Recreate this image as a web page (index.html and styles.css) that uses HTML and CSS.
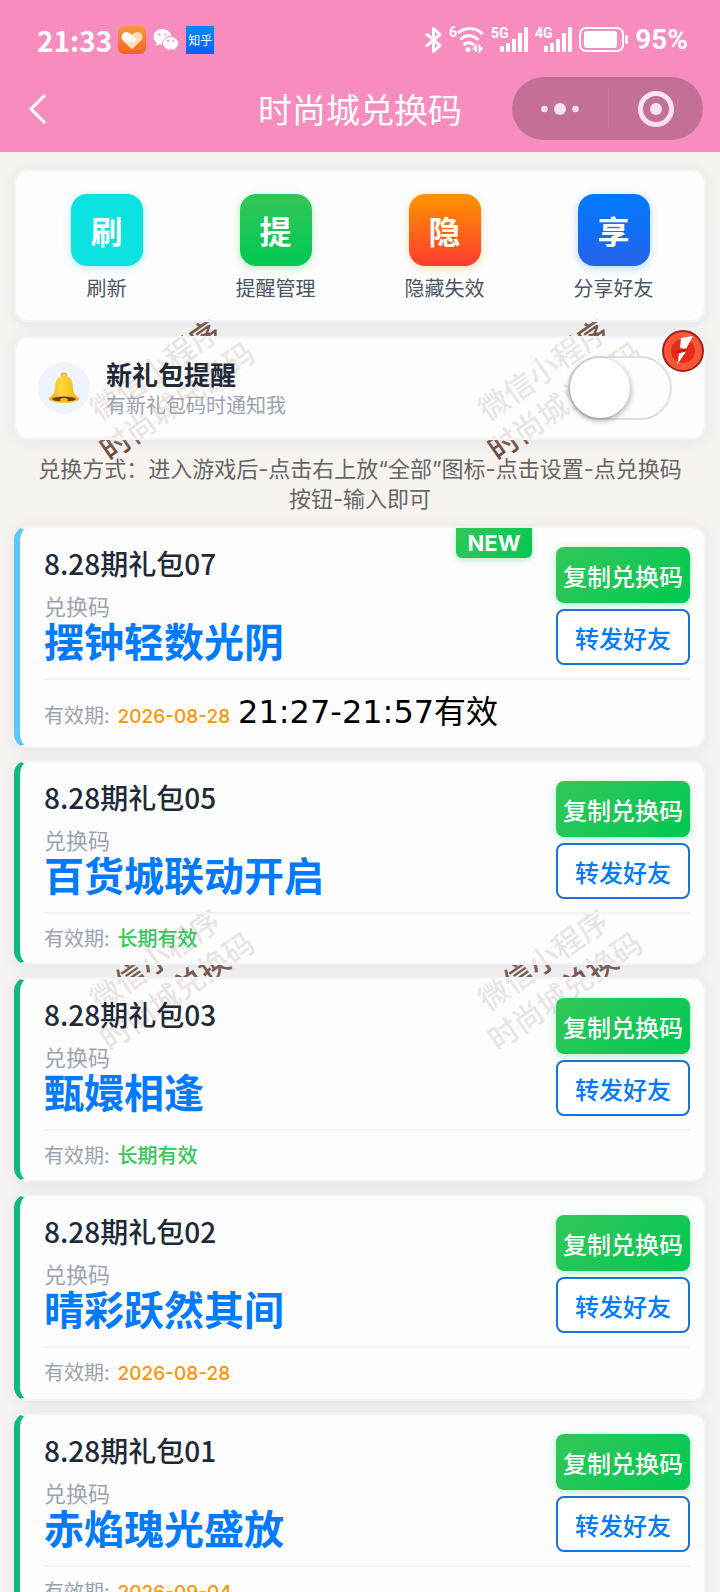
FILE: index.html
```html
<!DOCTYPE html>
<html lang="zh-CN">
<head>
    <meta charset="UTF-8">
    <meta name="viewport" content="width=device-width, initial-scale=1.0">
    <title>时尚城兑换码</title>
    <link rel="stylesheet" href="styles.css">
</head>
<body>
<div class="page">
    <header class="header">
        <div class="status">
            <span class="time">21:33</span>
            <svg width="28" height="28" viewBox="0 0 28 28">
                <defs>
                    <linearGradient id="orange" x1="0" y1="0" x2="0" y2="1">
                        <stop offset="0" stop-color="#f9973f"/>
                        <stop offset="1" stop-color="#f4641f"/>
                    </linearGradient>
                </defs>
                <rect width="28" height="28" rx="6" fill="url(#orange)"/>
                <path d="M14 23.500 5 15a6 6 0 0 1 0-7.500C7.500 5 11 6 14 8.500 17 5.500 21 5 23.500 8a5.500 5.500 0 0 1-.5 6.500z" fill="#ffdcb4"/>
                <path d="M4 12.500C3 9.500 4.500 6.500 8 6.500c3 0 5 2.500 8.500 5 2.500 2 .5 5.500-2.500 4.500-3-.8-7 1-10-3.500z" fill="#fff"/>
            </svg>
            <svg width="28" height="28" viewBox="0 0 28 28">
                <path d="M10.500 3C5.500 3 1.500 6.500 1.500 10.800c0 2.400 1.200 4.500 3.200 6L4 20l3.500-1.800c1 .3 2 .4 3 .4C16 18.600 19.500 15 19.500 10.800S15.500 3 10.500 3z" fill="#fff"/>
                <path d="M18.500 10.500c-4.400 0-8 3-8 6.800s3.600 6.700 8 6.700c.9 0 1.800-.1 2.600-.4L24 25l-.7-2.500c2-1.200 3.200-3.100 3.200-5.200 0-3.800-3.600-6.800-8-6.800z" fill="#fff" stroke="#f78dbf"/>
                <g fill="#f78dbf"><circle cx="7.500" cy="8.500" r="1.100"/><circle cx="13.500" cy="8.500" r="1.100"/><circle cx="16" cy="15" r="1"/><circle cx="21" cy="15" r="1"/></g>
            </svg>
            <span class="zhihu">知乎</span>
            <span class="spacer"></span>
            <svg width="18" height="28" viewBox="0 0 18 28" fill="none" stroke="#fff" stroke-width="3" stroke-linejoin="round" stroke-linecap="round">
                <path d="M2 8.500 15 19.500 8.500 25.500V2.500L15 8.500 2 19.500"/>
            </svg>
            <svg class="wifi" width="36" height="28" viewBox="0 0 36 28" fill="none" stroke="#fff" stroke-width="3">
                <text x="0" y="11" class="net">6</text>
                <path d="M9 7C16 1 27 1 33.500 8M11.500 13.500c5-5 12-5 18 .5M14.500 19c3-3 7-3 10.500 0"/>
                <circle cx="19" cy="23.500" r="2.500" fill="#fff" stroke="none"/>
                <path d="M27 26v-6l-3 3.500M30.500 18.500V25l3-3.500" stroke-width="2"/>
            </svg>
            <svg class="signal" width="38" height="28" viewBox="0 0 38 28" fill="#fff">
                <text x="0" y="12" class="net">5G</text>
                <path d="M9 20h4v6H9zM15 17h4v9h-4zM21 13h4v13h-4zM27 7h4v19h-4zM33 1h4v25h-4z"/>
            </svg>
            <svg class="signal" width="38" height="28" viewBox="0 0 38 28" fill="#fff">
                <text x="0" y="12" class="net">4G</text>
                <path d="M9 20h4v6H9zM15 17h4v9h-4zM21 13h4v13h-4zM27 7h4v19h-4zM33 1h4v25h-4z"/>
            </svg>
            <svg width="50" height="28" viewBox="0 0 50 28" fill="#fff">
                <rect x="1" y="2" width="43" height="23" rx="6" fill="none" stroke="#fff" stroke-width="2"/>
                <rect x="5" y="5" width="33" height="17" rx="3"/>
                <rect x="46" y="9" width="3" height="9" rx="1"/>
            </svg>
            <span class="battery">95%</span>
        </div>
        <nav class="nav">
            <button class="back" type="button" aria-label="返回">
                <svg width="18" height="32" viewBox="0 0 18 32" fill="none" stroke="#fff" stroke-width="3"><path d="M16 2 2 16l14 14"/></svg>
            </button>
            <h1 class="title">时尚城兑换码</h1>
            <div class="capsule">
                <button type="button" aria-label="更多">
                    <svg width="38" height="38" viewBox="0 0 38 38" fill="#f6e0ec"><circle cx="3.500" cy="19" r="3.300"/><circle cx="19" cy="19" r="6"/><circle cx="34.500" cy="19" r="3.300"/></svg>
                </button>
                <button type="button" aria-label="关闭">
                    <svg width="38" height="38" viewBox="0 0 38 38" fill="#f6e0ec"><circle cx="19" cy="19" r="15.500" fill="none" stroke="#fbe3ef" stroke-width="5"/><circle cx="19" cy="19" r="6"/></svg>
                </button>
            </div>
        </nav>
    </header>

    <div class="watermark" aria-hidden="true">
        <span>微信小程序<br>时尚城兑换码</span>
        <span>微信小程序<br>时尚城兑换码</span>
        <span>微信小程序<br>时尚城兑换码</span>
        <span>微信小程序<br>时尚城兑换码</span>
    </div>

    <main class="content">
        <section class="card menu">
            <button class="menu-item" type="button"><span class="menu-icon cyan">刷</span>刷新</button>
            <button class="menu-item" type="button"><span class="menu-icon green">提</span>提醒管理</button>
            <button class="menu-item" type="button"><span class="menu-icon orange">隐</span>隐藏失效</button>
            <button class="menu-item" type="button"><span class="menu-icon blue">享</span>分享好友</button>
        </section>

        <section class="card remind">
            <span class="bell">
                <svg width="32" height="32" viewBox="0 0 32 32">
                    <defs>
                        <linearGradient id="gold" x1="0" y1="0" x2="1" y2="0">
                            <stop offset="0" stop-color="#f5a916"/>
                            <stop offset=".4" stop-color="#ffd93b"/>
                            <stop offset="1" stop-color="#f6ae14"/>
                        </linearGradient>
                    </defs>
                    <circle cx="16" cy="3.500" r="2.300" fill="none" stroke="#e99b10" stroke-width="1.500"/>
                    <path d="M16 4c-6 0-8.500 4-8.800 10C7 20 5.500 23 1 26c-1 3 7 5 15 5s16-2 15-5c-4.500-3-6-6-6.200-12C24.500 8 22 4 16 4z" fill="url(#gold)"/>
                    <ellipse cx="16" cy="27" rx="12" ry="2.500" fill="#6d3f16"/>
                    <ellipse cx="16" cy="28" rx="4" ry="2" fill="#f5b823"/>
                </svg>
            </span>
            <label class="remind-text" for="remind">
                <b>新礼包提醒</b>
                <span>有新礼包码时通知我</span>
            </label>
            <input class="switch" type="checkbox" id="remind">
            <svg class="flash" width="42" height="42" viewBox="0 0 42 42">
                <circle cx="21" cy="21" r="20" fill="#fa5638" stroke="#a51f1c" stroke-width="2"/>
                <circle cx="21" cy="21" r="12" fill="#e42c14"/>
                <path d="M19 8 31 6 24 19l-6-1z" fill="#fff"/>
                <path d="M17 23.500 24 21.500 15.500 34z" fill="#fff"/>
                <path d="M14 21 24 18.500v2.500L14 23z" fill="#c3200f"/>
            </svg>
        </section>

        <p class="notice">兑换方式：进入游戏后-点击右上放“全部”图标-点击设置-点兑换码按钮-输入即可</p>

        <section class="list">
            <article class="card gift new">
                <span class="badge">NEW</span>
                <div class="gift-main">
                    <div class="info">
                        <h2>8.28期礼包07</h2>
                        <p class="label">兑换码</p>
                        <p class="code">摆钟轻数光阴</p>
                    </div>
                    <div class="actions">
                        <button class="btn copy" type="button">复制兑换码</button>
                        <button class="btn share" type="button">转发好友</button>
                    </div>
                </div>
                <div class="valid">有效期: <span class="date">2026-08-28</span> <span class="hours">21:27-21:57有效</span></div>
            </article>

            <article class="card gift">
                <div class="gift-main">
                    <div class="info">
                        <h2>8.28期礼包05</h2>
                        <p class="label">兑换码</p>
                        <p class="code">百货城联动开启</p>
                    </div>
                    <div class="actions">
                        <button class="btn copy" type="button">复制兑换码</button>
                        <button class="btn share" type="button">转发好友</button>
                    </div>
                </div>
                <div class="valid">有效期: <span class="long">长期有效</span></div>
            </article>

            <article class="card gift">
                <div class="gift-main">
                    <div class="info">
                        <h2>8.28期礼包03</h2>
                        <p class="label">兑换码</p>
                        <p class="code">甄嬛相逢</p>
                    </div>
                    <div class="actions">
                        <button class="btn copy" type="button">复制兑换码</button>
                        <button class="btn share" type="button">转发好友</button>
                    </div>
                </div>
                <div class="valid">有效期: <span class="long">长期有效</span></div>
            </article>

            <article class="card gift">
                <div class="gift-main">
                    <div class="info">
                        <h2>8.28期礼包02</h2>
                        <p class="label">兑换码</p>
                        <p class="code">晴彩跃然其间</p>
                    </div>
                    <div class="actions">
                        <button class="btn copy" type="button">复制兑换码</button>
                        <button class="btn share" type="button">转发好友</button>
                    </div>
                </div>
                <div class="valid">有效期: <span class="date">2026-08-28</span></div>
            </article>

            <article class="card gift">
                <div class="gift-main">
                    <div class="info">
                        <h2>8.28期礼包01</h2>
                        <p class="label">兑换码</p>
                        <p class="code">赤焰瑰光盛放</p>
                    </div>
                    <div class="actions">
                        <button class="btn copy" type="button">复制兑换码</button>
                        <button class="btn share" type="button">转发好友</button>
                    </div>
                </div>
                <div class="valid">有效期: <span class="date">2026-09-04</span></div>
            </article>
        </section>
    </main>
</div>
</body>
</html>
```

FILE: styles.css
```css
* {
    box-sizing: border-box;
}
body {
    margin: 0;
    font-family: "Noto Sans CJK SC", sans-serif;
    color: #1f2937;
}
h1, h2, p {
    margin: 0;
}
button {
    font-family: inherit;
    border: none;
    padding: 0;
    background: none;
    cursor: pointer;
}
svg {
    display: block;
    flex: none;
    overflow: visible;
}

.page {
    position: relative;
    display: flex;
    flex-direction: column;
    height: 100vh;
    overflow: hidden;
    background: linear-gradient(#f7f4ee, #f7f3f2);
}

/* header */
.header {
    position: relative;
    z-index: 2;
    flex: none;
    padding-bottom: 12px;
    background: #f78dbf;
    color: #fff;
}
.status {
    display: flex;
    align-items: center;
    gap: 6px;
    height: 77px;
    padding: 2px 32px 0 37px;
}
.time {
    font-size: 28px;
    font-weight: 700;
    line-height: 32px;
}
.zhihu {
    width: 28px;
    background: linear-gradient(#0a8af5, #0560fa);
    font-size: 12px;
    line-height: 28px;
    text-align: center;
}
.spacer {
    flex: 1;
}
.net {
    fill: #fff;
    stroke: none;
    font-family: Roboto, sans-serif;
    font-size: 14px;
    font-weight: 700;
}
.battery {
    font-family: Roboto, sans-serif;
    font-size: 28px;
    font-weight: 700;
    line-height: 32px;
}
.nav {
    display: grid;
    grid-template-columns: 1fr auto 1fr;
    align-items: center;
    padding: 0 17px;
}
.back {
    justify-self: start;
    padding: 8px 12px;
}
.title {
    font-size: 34px;
    font-weight: 400;
    line-height: 48px;
}
.capsule {
    justify-self: end;
    display: grid;
    grid-template-columns: 1fr 1fr;
    align-items: center;
    width: 191px;
    height: 63px;
    border-radius: 32px;
    background: #c47096;
}
.capsule button {
    display: grid;
    place-items: center;
    height: 40px;
}
.capsule button + button {
    border-left: 1px solid #c97a9e;
}

/* tiled text that shows through the cards */
.watermark {
    position: absolute;
    top: 89px;
    left: -29px;
    display: grid;
    grid-template-columns: repeat(2, 388px);
    grid-auto-rows: 590px;
    place-items: center;
    color: #6f4a3c;
    font-size: 30px;
    font-weight: 500;
    line-height: 38px;
    text-align: center;
}
.watermark span {
    transform: rotate(-35deg);
}

/* content */
.content {
    position: relative;
    z-index: 1;
    flex: 1;
    min-height: 0;
    overflow-y: auto;
    scrollbar-width: none;
    padding: 17px 14px;
}
.card {
    position: relative;
    border: 2px solid #f3f4f8;
    border-radius: 14px;
    background: rgba(254, 254, 255, 0.86);
    background-clip: padding-box;
    box-shadow: 0 2px 14px rgba(190, 200, 228, 0.35);
}
.menu {
    display: grid;
    grid-template-columns: repeat(4, 1fr);
    padding: 23px 6px 18px;
    margin-bottom: 14px;
}
.menu-item {
    display: flex;
    flex-direction: column;
    align-items: center;
    gap: 8px;
    color: #4b5563;
    font-size: 20px;
    line-height: 28px;
}
.menu-icon {
    width: 72px;
    border-radius: 16px;
    color: #fff;
    font-size: 32px;
    font-weight: 700;
    line-height: 72px;
}
.cyan {
    background: #0de2e2;
    box-shadow: 0 2px 8px rgba(13, 226, 226, 0.3);
}
.green {
    background: linear-gradient(#34c759, #00c853);
    box-shadow: 0 2px 8px rgba(0, 200, 83, 0.3);
}
.orange {
    background: linear-gradient(#ff9500, #ff3b30);
    box-shadow: 0 2px 8px rgba(255, 149, 0, 0.3);
}
.blue {
    background: linear-gradient(#007aff, #2563eb);
    box-shadow: 0 2px 8px rgba(0, 122, 255, 0.3);
}
.remind {
    display: flex;
    align-items: center;
    gap: 16px;
    padding: 18px 32px 18px 22px;
}
.bell {
    display: grid;
    place-items: center;
    width: 52px;
    height: 52px;
    border-radius: 50%;
    background: #eef5ff;
}
.remind-text {
    flex: 1;
}
.remind-text b {
    display: block;
    font-size: 26px;
    line-height: 34px;
}
.remind-text span {
    display: block;
    color: #9ca3af;
    font-size: 20px;
    line-height: 28px;
}
.switch {
    appearance: none;
    width: 104px;
    height: 64px;
    margin: 0;
    border: 2px solid #dfdfdf;
    border-radius: 32px;
    background: #fdfdfd;
}
.switch::before {
    content: "";
    display: block;
    width: 60px;
    height: 60px;
    border-radius: 50%;
    background: #fff;
    box-shadow: 0 2px 6px rgba(0, 0, 0, 0.4);
}
.switch:checked::before {
    margin-left: auto;
}
.flash {
    position: absolute;
    top: -8px;
    right: 0;
}
.notice {
    padding: 14px 20px 12px;
    color: #666;
    font-family: Inter, "Noto Sans CJK SC", sans-serif;
    font-size: 22px;
    line-height: 30px;
    text-align: center;
}

/* gift cards */
.list {
    display: flex;
    flex-direction: column;
    gap: 12px;
}
.gift {
    padding: 19px 14px 11px 24px;
    border-left: 6px solid #10b981;
}
.gift.new {
    border-left-color: #5ac8fa;
}
.badge {
    position: absolute;
    top: 0;
    right: 172px;
    width: 76px;
    border-radius: 0 0 6px 6px;
    background: linear-gradient(135deg, #34c759, #00c853);
    box-shadow: 0 2px 6px rgba(0, 200, 83, 0.3);
    color: #fff;
    font-family: Inter, sans-serif;
    font-size: 22px;
    font-weight: 700;
    line-height: 30px;
    text-align: center;
}
.gift-main {
    display: flex;
    justify-content: space-between;
    padding-bottom: 13px;
    border-bottom: 2px solid #f1f3f6;
}
.info h2 {
    margin-bottom: 12px;
    font-size: 28px;
    font-weight: 500;
    line-height: 32px;
}
.label {
    color: #9ca3af;
    font-size: 22px;
    line-height: 28px;
}
.code {
    color: #007aff;
    font-size: 40px;
    font-weight: 700;
    line-height: 42px;
}
.actions {
    display: flex;
    flex-direction: column;
    gap: 6px;
}
.btn {
    width: 134px;
    height: 56px;
    border-radius: 8px;
    font-size: 24px;
    font-weight: 500;
}
.copy {
    background: linear-gradient(135deg, #34c759, #00c853);
    box-shadow: 0 2px 8px rgba(0, 200, 83, 0.3);
    color: #fff;
}
.share {
    border: 2px solid #1a73d9;
    background: #fff;
    color: #007aff;
}
.valid {
    display: flex;
    align-items: baseline;
    gap: 8px;
    padding-top: 10px;
    color: #9ca3af;
    font-size: 20px;
    line-height: 28px;
}
.date {
    color: #ff9500;
    font-family: Inter, sans-serif;
    font-size: 19px;
    font-weight: 500;
}
.long {
    color: #34c759;
    font-weight: 500;
}
.hours {
    color: #000;
    font-family: "DejaVu Sans", "Noto Sans CJK SC", sans-serif;
    font-size: 32px;
    line-height: 45px;
}
```
